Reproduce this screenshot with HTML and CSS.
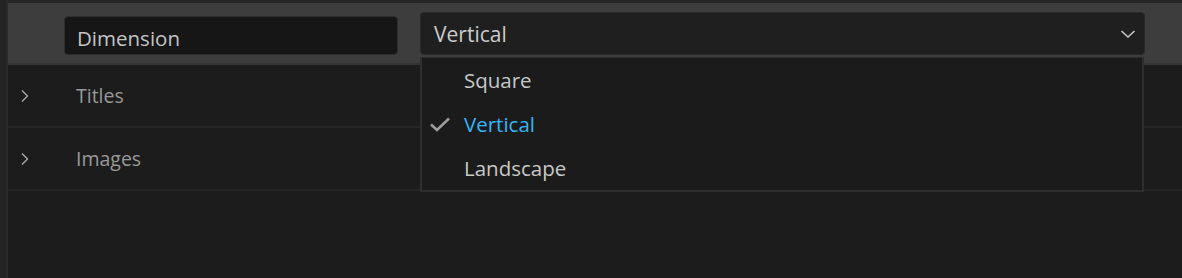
FILE: index.html
```html
<!DOCTYPE html>
<html lang="en">
<head>
  <meta charset="UTF-8">
  <meta name="viewport" content="width=device-width, initial-scale=1.0">
  <title>Dimension</title>
  <link rel="stylesheet" href="styles.css">
</head>
<body>

  <div class="app">
    <div class="side-strip"></div>

    <div class="panel">
      <!-- Ust bar -->
      <div class="toolbar">
        <div class="name-field">Dimension</div>

        <div class="select-wrap">
          <div class="select">
            <span>Vertical</span>
            <svg class="select-arrow" width="16" height="10" viewBox="0 0 16 10">
              <path d="M1.5 2 L8 8 L14.5 2" fill="none" stroke="#c8c8c8" stroke-width="1.6"/>
            </svg>
          </div>

          <!-- Acik menu -->
          <ul class="menu">
            <li class="menu-item">Square</li>
            <li class="menu-item selected">
              <svg class="check" width="22" height="16" viewBox="0 0 22 16">
                <path d="M2 8.5 L8 14 L20 2.5" fill="none" stroke="#9c9c9c" stroke-width="2.6"/>
              </svg>
              Vertical
            </li>
            <li class="menu-item">Landscape</li>
          </ul>
        </div>
      </div>

      <!-- Liste -->
      <div class="rows">
        <div class="row">
          <svg class="row-arrow" width="10" height="14" viewBox="0 0 10 14">
            <path d="M2 1.5 L7.5 7 L2 12.5" fill="none" stroke="#a8a8a8" stroke-width="1.4"/>
          </svg>
          <span class="row-label">Titles</span>
        </div>
        <div class="row">
          <svg class="row-arrow" width="10" height="14" viewBox="0 0 10 14">
            <path d="M2 1.5 L7.5 7 L2 12.5" fill="none" stroke="#a8a8a8" stroke-width="1.4"/>
          </svg>
          <span class="row-label">Images</span>
        </div>
      </div>
    </div>
  </div>

</body>
</html>
```

FILE: styles.css
```css
body {
  margin: 0;
  padding: 0;
  background-color: #1c1c1c;
  font-family: "Open Sans", "Noto Sans", sans-serif;
}

.app {
  display: flex;
  height: 278px;
}

.side-strip {
  width: 6px;
  background-color: #232323;
  border-right: 2px solid #2b2b2b;
}

.panel {
  flex: 1;
  border-top: 3px solid #252525;
}

.toolbar {
  display: flex;
  align-items: center;
  height: 60px;
  background-color: #3d3d3d;
  border-bottom: 2px solid #353535;
  padding-left: 56px;
  padding-right: 37px;
}

.name-field {
  width: 320px;
  height: 34px;
  margin-top: 4px;
  padding: 3px 0 0 12px;
  box-sizing: content-box;
  background-color: #161616;
  border: 1px solid #2e2e2e;
  border-radius: 4px;
  color: #c4c4c4;
  font-size: 20.5px;
  line-height: 36px;
}

.select-wrap {
  position: relative;
  flex: 1;
  margin-left: 22px;
  margin-top: 1px;
}

.select {
  display: flex;
  align-items: center;
  justify-content: space-between;
  height: 41px;
  padding: 0 8px 0 13px;
  background-color: #1f1f1f;
  border: 1px solid #2a2a2a;
  border-radius: 4px;
  color: #cccccc;
  font-size: 21px;
}

.menu {
  position: absolute;
  top: 45px;
  left: 0;
  right: 1px;
  margin: 0;
  padding: 0;
  list-style: none;
  background-color: #1b1b1b;
  border: 2px solid #2e2e2e;
  border-top-width: 1px;
}

.menu-item {
  position: relative;
  height: 44px;
  line-height: 44px;
  padding-left: 42px;
  color: #c8c8c8;
  font-size: 20.5px;
}

.menu-item.selected {
  color: #35b5f5;
}

.check {
  position: absolute;
  left: 7px;
  top: 14px;
}

.row {
  display: flex;
  align-items: center;
  height: 61px;
  border-bottom: 2px solid #262626;
}

.row-arrow {
  margin-left: 12px;
  margin-right: 46px;
}

.row-label {
  color: #999999;
  font-size: 19.5px;
}
```
